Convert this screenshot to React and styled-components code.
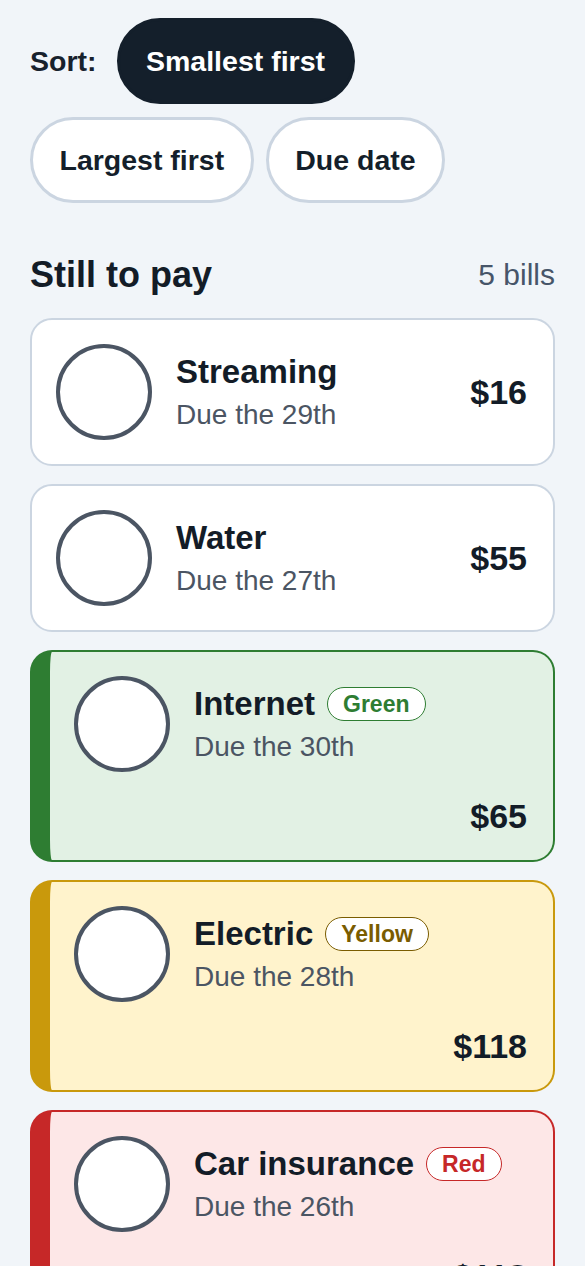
import React from 'react';
import styled, { createGlobalStyle } from 'styled-components';

const GlobalStyle = createGlobalStyle`
  * { box-sizing: border-box; }
  html, body { margin: 0; padding: 0; background: #f1f5f9; }
  body { font-family: "Liberation Sans", Arial, sans-serif; color: #131c27; }
`;

const tones = {
  plain: { border: '#cbd5e1', bg: '#ffffff', ink: '#131c27' },
  green: { border: '#2e7d32', bg: '#e2f1e4', ink: '#2e7d32' },
  yellow: { border: '#c9990c', bg: '#fff3cc', ink: '#7a5c00' },
  red: { border: '#c62828', bg: '#fde7e7', ink: '#c62828' },
};

const Page = styled.main`
  padding: 18px 30px 40px;
`;

const SortBar = styled.div`
  display: flex;
  flex-wrap: wrap;
  align-items: center;
  gap: 13px 12px;
`;

const SortLabel = styled.span`
  font-size: 28.5px;
  font-weight: 700;
  color: #17212d;
  margin-right: 8px;
`;

const Pill = styled.button`
  height: 86px;
  padding: 0 26.5px;
  border-radius: 43px;
  border: 3px solid ${(p) => (p.$active ? '#141f2b' : '#cbd5e1')};
  background: ${(p) => (p.$active ? '#141f2b' : '#ffffff')};
  color: ${(p) => (p.$active ? '#ffffff' : '#141f2b')};
  font-family: "Liberation Sans", Arial, sans-serif;
  font-size: 28.5px;
  font-weight: 700;
  cursor: pointer;
`;

const SectionHeader = styled.div`
  display: flex;
  justify-content: space-between;
  align-items: center;
  margin: 50px 0 22px;
`;

const SectionTitle = styled.h2`
  margin: 0;
  font-size: 36px;
  line-height: 43px;
  font-weight: 700;
  color: #131c27;
`;

const Count = styled.span`
  font-size: 30px;
  line-height: 36px;
  color: #475569;
`;

const List = styled.div`
  display: flex;
  flex-direction: column;
  gap: 18px;
`;

const Card = styled.article`
  display: flex;
  flex-wrap: wrap;
  align-items: center;
  gap: 24px;
  padding: 24px 26px 24px 24px;
  border: ${(p) => (p.$tone === 'plain' ? 2 : 2.5)}px solid ${(p) => tones[p.$tone].border};
  border-left-width: ${(p) => (p.$tone === 'plain' ? 2 : 20)}px;
  border-radius: 22px;
  background: ${(p) => tones[p.$tone].bg};
`;

const Check = styled.button`
  flex: none;
  width: 96px;
  height: 96px;
  border-radius: 50%;
  border: 4px solid #4b5563;
  background: #ffffff;
  padding: 0;
  cursor: pointer;
`;

const Info = styled.div`
  flex: 1;
  min-width: 0;
`;

const TitleRow = styled.div`
  display: flex;
  align-items: center;
  gap: 12px;
`;

const Title = styled.span`
  font-size: 33px;
  line-height: 40px;
  font-weight: 700;
  color: #131c27;
`;

const Badge = styled.span`
  font-size: 23px;
  line-height: 26px;
  font-weight: 700;
  padding: 3px 15px;
  border-radius: 999px;
  border: 1.5px solid ${(p) => tones[p.$tone].ink};
  color: ${(p) => tones[p.$tone].ink};
  background: #ffffff;
`;

const Due = styled.div`
  margin-top: 6px;
  font-size: 28px;
  line-height: 34px;
  color: #4b5563;
`;

const Amount = styled.div`
  font-size: 34px;
  line-height: 40px;
  font-weight: 700;
  color: #131c27;
  flex-basis: ${(p) => (p.$wrap ? '100%' : 'auto')};
  text-align: right;
`;

const bills = [
  { name: 'Streaming', due: '29th', amount: 16, tone: 'plain' },
  { name: 'Water', due: '27th', amount: 55, tone: 'plain' },
  { name: 'Internet', due: '30th', amount: 65, tone: 'green', flag: 'Green' },
  { name: 'Electric', due: '28th', amount: 118, tone: 'yellow', flag: 'Yellow' },
  { name: 'Car insurance', due: '26th', amount: 118, tone: 'red', flag: 'Red' },
];

export default function App() {
  return (
    <>
      <GlobalStyle />
      <Page>
        <SortBar>
          <SortLabel>Sort:</SortLabel>
          <Pill $active>Smallest first</Pill>
          <Pill>Largest first</Pill>
          <Pill>Due date</Pill>
        </SortBar>
        <SectionHeader>
          <SectionTitle>Still to pay</SectionTitle>
          <Count>5 bills</Count>
        </SectionHeader>
        <List>
          {bills.map((b) => (
            <Card key={b.name} $tone={b.tone}>
              <Check aria-label={`Mark ${b.name} paid`} />
              <Info>
                <TitleRow>
                  <Title>{b.name}</Title>
                  {b.flag && <Badge $tone={b.tone}>{b.flag}</Badge>}
                </TitleRow>
                <Due>Due the {b.due}</Due>
              </Info>
              <Amount $wrap={!!b.flag}>${b.amount}</Amount>
            </Card>
          ))}
        </List>
      </Page>
    </>
  );
}
